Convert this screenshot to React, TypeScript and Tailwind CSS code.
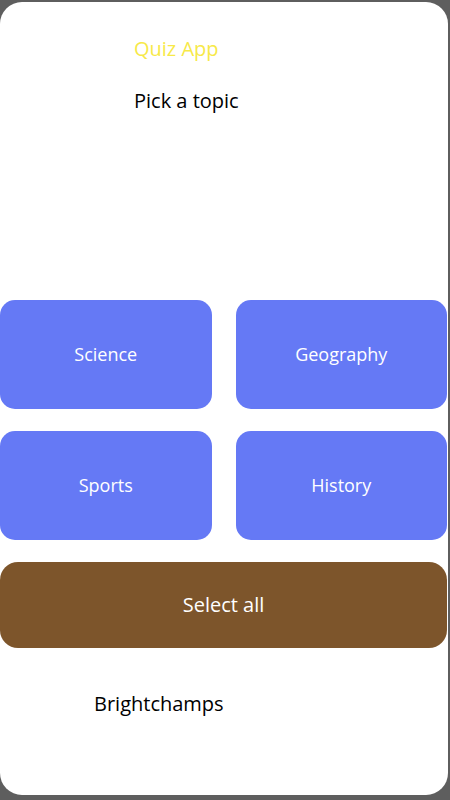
import React from "react";

const topics = ["Science", "Geography", "Sports", "History"];

export default function App() {
  return (
    <div className="w-[450px] h-[800px] bg-[#5e5e5e] pt-[2px] pr-[2px] pb-[5px] font-['Segoe_UI','Open_Sans',sans-serif]">
      <div className="h-full bg-white rounded-[22px] flex flex-col overflow-hidden">
        {/* Header */}
        <div className="pl-[134px] pt-[33px]">
          <h1 className="text-[20px] leading-[28px] text-[#f7e948]">Quiz App</h1>
          <p className="mt-[24px] text-[20px] leading-[28px] text-black">Pick a topic</p>
        </div>

        {/* Topics */}
        <div className="mt-[185px] grid grid-cols-2 gap-x-[24px] gap-y-[22px] pr-[1px]">
          {topics.map((t) => (
            <button
              key={t}
              className="h-[109px] rounded-[15px] bg-[#6579f5] text-white text-[18px]"
            >
              {t}
            </button>
          ))}
        </div>

        <button className="mt-[22px] mr-[1px] h-[86px] rounded-[18px] bg-[#7d552b] text-white text-[20px]">
          Select all
        </button>

        <p className="mt-[42px] pl-[94px] text-[20px] leading-[28px] text-black">Brightchamps</p>
      </div>
    </div>
  );
}
